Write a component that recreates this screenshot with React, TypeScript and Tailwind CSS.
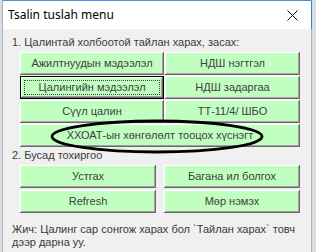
import React from 'react';

const FONT = "font-['Liberation_Sans','DejaVu_Sans',sans-serif]";

type BtnProps = { label: string; focused?: boolean; className?: string };

const WinButton: React.FC<BtnProps> = ({ label, focused, className = '' }) => (
  <button
    className={`relative flex items-center justify-center bg-[#c0ffc0] text-[11px] text-[#404040] ${FONT} ${
      focused
        ? 'border border-black shadow-[inset_-1px_-1px_#696969,inset_1px_1px_#fff,inset_-2px_-2px_#a0a0a0]'
        : 'shadow-[inset_-1px_-1px_#696969,inset_1px_1px_#fff,inset_-2px_-2px_#a0a0a0]'
    } ${className}`}
  >
    {focused && <span className="absolute inset-[3px] border border-dotted border-[#444]" />}
    <span className="relative">{label}</span>
  </button>
);

export default function App() {
  return (
    <div className="w-[316px] h-[252px] overflow-hidden bg-[#dcdcdc] flex">
      {/* Window */}
      <div className="ml-[2px] w-[310px] h-[260px] border border-[#9fb6cc] border-t-[#4a90d9] bg-[#f0f0f0] flex flex-col">
        {/* Title bar */}
        <div className="h-[28px] bg-white border-r border-r-[#2b86d8] -mr-[1px] flex items-center justify-between pl-[5px] pr-[13px]">
          <span className="text-[12px] text-black font-['Noto_Sans',sans-serif]">Tsalin tuslah menu</span>
          <svg width="11" height="11" viewBox="0 0 11 11">
            <path d="M0.5 0.5 L10.5 10.5 M10.5 0.5 L0.5 10.5" stroke="#000" strokeWidth="1" />
          </svg>
        </div>

        {/* Content */}
        <div className={`pl-[9px] pt-[6px] flex flex-col ${FONT}`}>
          <div className="text-[11px] leading-[14px] text-[#3a3a3a]">1. Цалинтай холбоотой тайлан харах, засах:</div>
          <div className="ml-[8px] mt-[3px] grid grid-cols-[144px_135px] gap-x-[1px] gap-y-[1px] auto-rows-[23px]">
            <WinButton label="Ажилтнуудын мэдээлэл" />
            <WinButton label="НДШ нэгтгэл" />
            <WinButton label="Цалингийн мэдээлэл" focused />
            <WinButton label="НДШ задаргаа" />
            <WinButton label="Сүүл цалин" />
            <WinButton label="ТТ-11/4/  ШБО" />
            <div className="relative col-span-2 flex">
              <WinButton label="ХХОАТ-ын хөнгөлөлт тооцох хүснэгт" className="flex-1" />
              {/* hand-drawn highlight oval */}
              <svg className="absolute left-[30px] top-[-5px]" width="214" height="35" viewBox="0 0 214 35">
                <ellipse cx="107" cy="17.5" rx="105" ry="15.5" fill="none" stroke="#000" strokeWidth="2.8" />
              </svg>
            </div>
          </div>

          <div className="mt-[1px] text-[11px] leading-[14px] text-[#3a3a3a]">2. Бусад тохиргоо</div>
          <div className="ml-[8px] mt-[3px] grid grid-cols-[136px_136px] gap-x-[8px] gap-y-[2px] auto-rows-[23px]">
            <WinButton label="Устгах" />
            <WinButton label="Багана ил болгох" />
            <WinButton label="Refresh" />
            <WinButton label="Мөр нэмэх" />
          </div>

          <div className="mt-[10px] pr-[10px] text-[11px] leading-[13px] text-[#3a3a3a]">
            Жич: Цалинг сар сонгож харах бол `Тайлан харах` товч дээр дарна уу.
          </div>
        </div>
      </div>
    </div>
  );
}
